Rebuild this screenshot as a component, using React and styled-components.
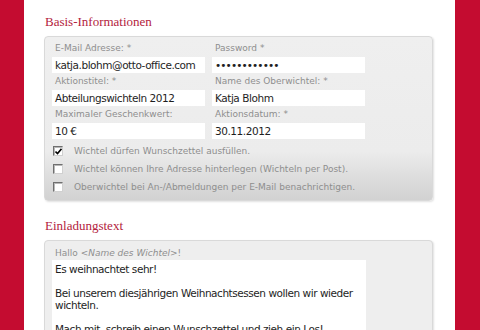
import React from 'react';
import styled, { createGlobalStyle } from 'styled-components';

const Global = createGlobalStyle`
  html, body { margin: 0; padding: 0; background: #fff; }
  body { font-family: "DejaVu Sans", Verdana, sans-serif; }
`;

const Page = styled.div`
  display: flex;
  width: 480px;
  height: 330px;
  overflow: hidden;
`;

const Strip = styled.div`
  flex: 0 0 ${p => p.$w}px;
  background: #c40c30;
`;

const Content = styled.main`
  flex: 1;
  background: #fff;
  padding: 12px 0 0 20px;
`;

const Heading = styled.h2`
  margin: ${p => (p.$first ? '0' : '15px')} 0 4px 1px;
  font-family: "Liberation Serif", "DejaVu Serif", serif;
  font-weight: normal;
  font-size: 13px;
  line-height: 20px;
  color: #b3223d;
`;

const Panel = styled.section`
  box-sizing: border-box;
  width: 389px;
  border: 1px solid #d9d9d9;
  border-radius: 4px;
  padding: ${p => p.$pt}px 7px 4px;
  background: ${p => p.$shaded
    ? 'linear-gradient(to bottom, #efefef 0%, #ececec 70%, #dfdfdf 84%, #d2d2d2 100%)'
    : '#eeeeee'};
  box-shadow: 1px 1px 2px rgba(0, 0, 0, 0.12);
`;

const Grid = styled.div`
  display: grid;
  grid-template-columns: 153px 153px;
  column-gap: 7px;
`;

const Field = styled.div`
  display: flex;
  flex-direction: column;
`;

const Label = styled.label`
  display: block;
  height: ${p => p.$h || 17}px;
  line-height: ${p => p.$h || 17}px;
  padding-left: 3px;
  font-size: 9px;
  color: #8e8e8e;
  white-space: nowrap;
  em { font-style: italic; }
`;

const Input = styled.div`
  box-sizing: border-box;
  height: 16px;
  line-height: 16px;
  padding: 0 3px;
  background: #fff;
  font-size: 10.5px;
  letter-spacing: ${p => (p.$password ? '-0.9px' : '-0.45px')};
  color: #1e1e1e;
  white-space: nowrap;
  overflow: hidden;
`;

const Checks = styled.div`
  margin-top: 3px;
  display: flex;
  flex-direction: column;
`;

const CheckRow = styled.div`
  display: flex;
  align-items: center;
  height: 18px;
  gap: 11px;
  padding-left: 1px;
  font-size: 9px;
  color: #8e8e8e;
`;

const Box = styled.span`
  position: relative;
  box-sizing: border-box;
  width: 10px;
  height: 10px;
  flex: 0 0 10px;
  background: #fff;
  border-top: 1px solid #6f6f6f;
  border-left: 1px solid #6f6f6f;
  border-right: 1px solid #d0d0d0;
  border-bottom: 1px solid #d0d0d0;
  box-shadow: inset 1px 1px 0 #b8b8b8;
`;

const Tick = styled.svg`
  position: absolute;
  left: 1px;
  top: 1px;
`;

const TextArea = styled.div`
  box-sizing: border-box;
  width: 314px;
  height: 90px;
  padding: 3px 3px;
  background: #fff;
  font-size: 10.5px;
  letter-spacing: -0.45px;
  line-height: 12px;
  color: #1e1e1e;
  white-space: pre-wrap;
`;

function Check({ checked, children }) {
  return (
    <CheckRow>
      <Box>
        {checked && (
          <Tick width="7" height="7" viewBox="0 0 7 7">
            <path d="M0.5 3.5 L2.5 5.5 L6.5 0.8" stroke="#000" strokeWidth="1.6" fill="none" />
          </Tick>
        )}
      </Box>
      <span>{children}</span>
    </CheckRow>
  );
}

const fields = [
  ['E-Mail Adresse: *', 'katja.blohm@otto-office.com'],
  ['Password *', '••••••••••••', true],
  ['Aktionstitel: *', 'Abteilungswichteln 2012'],
  ['Name des Oberwichtel: *', 'Katja Blohm'],
  ['Maximaler Geschenkwert:', '10 €'],
  ['Aktionsdatum: *', '30.11.2012'],
];

const invitation =
  'Es weihnachtet sehr!\n\nBei unserem diesjährigen Weihnachtsessen wollen wir wieder wichteln.\n\nMach mit, schreib einen Wunschzettel und zieh ein Los!';

export default function App() {
  return (
    <>
      <Global />
      <Page>
        <Strip $w={24} />
        <Content>
          <Heading $first>Basis-Informationen</Heading>
          <Panel $shaded $pt={3}>
            <Grid>
              {fields.map(([label, value, pw]) => (
                <Field key={label}>
                  <Label>{label}</Label>
                  <Input $password={pw}>{value}</Input>
                </Field>
              ))}
            </Grid>
            <Checks>
              <Check checked>Wichtel dürfen Wunschzettel ausfüllen.</Check>
              <Check>Wichtel können Ihre Adresse hinterlegen (Wichteln per Post).</Check>
              <Check>Oberwichtel bei An-/Abmeldungen per E-Mail benachrichtigen.</Check>
            </Checks>
          </Panel>
          <Heading>Einladungstext</Heading>
          <Panel $pt={6}>
            <Label $h={13}>Hallo <em>&lt;Name des Wichtel&gt;</em>!</Label>
            <TextArea>{invitation}</TextArea>
          </Panel>
        </Content>
        <Strip $w={25} />
      </Page>
    </>
  );
}
